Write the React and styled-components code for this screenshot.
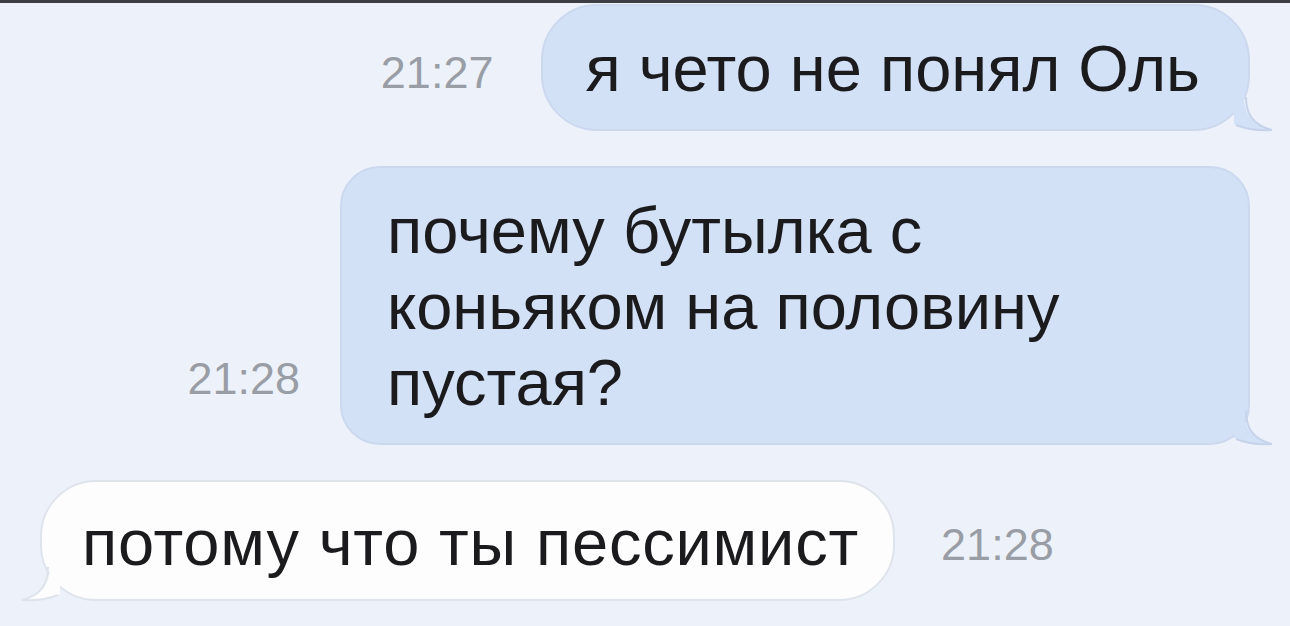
import styled, { createGlobalStyle } from "styled-components";

const GlobalStyle = createGlobalStyle`
  html, body {
    margin: 0;
    padding: 0;
    background: #edf2fa;
  }
  body {
    font-family: "Liberation Sans", Arial, sans-serif;
  }
`;

const Page = styled.div`
  width: 1290px;
  height: 626px;
  box-sizing: border-box;
  border-top: 3px solid #3c3e44;
  background: #edf2fa;
  overflow: hidden;
  padding: 1px 40px 0 40px;
`;

const Thread = styled.div`
  display: flex;
  flex-direction: column;
  gap: ${(p) => p.gap || 36}px;
`;

const Row = styled.div`
  display: flex;
  align-items: flex-end;
  justify-content: ${(p) => (p.out ? "flex-end" : "flex-start")};
  gap: ${(p) => p.gap || 44}px;
`;

const Time = styled.span`
  font-size: 45px;
  color: #999da5;
  margin-bottom: ${(p) => p.lift || 32}px;
`;

const Bubble = styled.div`
  position: relative;
  box-sizing: border-box;
  width: ${(p) => (p.w ? `${p.w}px` : "auto")};
  padding: ${(p) => p.pt || 25}px ${(p) => p.pr || 48}px ${(p) => p.pb || 22}px
    ${(p) => p.pl || 42}px;
  border-radius: ${(p) => p.r || 48}px;
  background: ${(p) => (p.out ? "#d3e1f7" : "#fdfdfe")};
  border: 2px solid ${(p) => (p.out ? "#cbd8ee" : "#dfe4ec")};
  color: #1b1b1d;
  font-size: 65px;
  line-height: 76px;
  letter-spacing: ${(p) => p.track || 0}px;
`;

const Tail = styled.svg`
  position: absolute;
  bottom: -2px;
  ${(p) => (p.out ? "right: -24px;" : "left: -20px; transform: scaleX(-1);")}
  width: 40px;
  height: 34px;
  overflow: visible;
`;

function BubbleTail({ out }) {
  const fill = out ? "#d3e1f7" : "#fdfdfe";
  const stroke = out ? "#c6d3ea" : "#dfe4ec";
  return (
    <Tail out={out} viewBox="0 0 40 34">
      <path
        d="M12 0 C12 16 20 28 40 33 C26 34 14 32 2 27 L2 0 Z"
        fill={fill}
      />
      <path
        d="M14 0 C14 16 20 28 40 33 C26 34 14 32 4 28"
        fill="none"
        stroke={stroke}
        strokeWidth="2"
      />
    </Tail>
  );
}

export default function App() {
  return (
    <>
      <GlobalStyle />
      <Page>
        <Thread gap={35}>
          <Row out gap={48}>
            <Time>21:27</Time>
            <Bubble out r={56}>
              я чето не понял Оль
              <BubbleTail out />
            </Bubble>
          </Row>
          <Row out gap={40}>
            <Time lift={40}>21:28</Time>
            <Bubble out w={910} pl={45} r={40}>
              почему бутылка с<br />
              коньяком на половину<br />
              пустая?
              <BubbleTail out />
            </Bubble>
          </Row>
          <Row gap={46}>
            <Bubble pt={23} pb={18} pr={34} pl={40} r={56} track={0.8}>
              потому что ты пессимист
              <BubbleTail />
            </Bubble>
            <Time lift={30}>21:28</Time>
          </Row>
        </Thread>
      </Page>
    </>
  );
}
